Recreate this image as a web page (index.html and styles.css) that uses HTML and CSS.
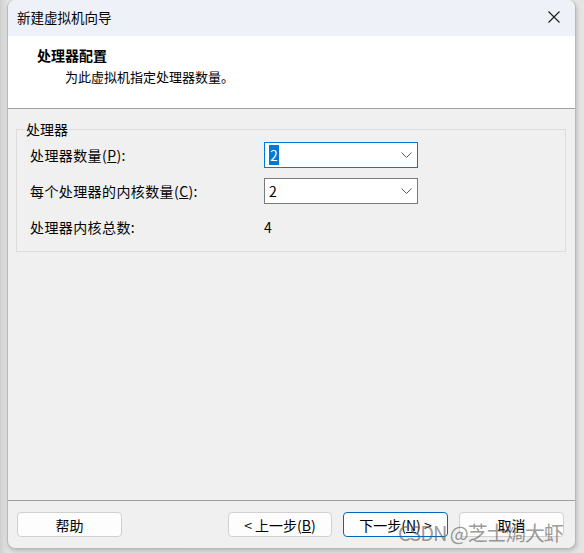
FILE: index.html
```html
<!DOCTYPE html>
<html lang="zh-CN">

<head>
    <meta charset="UTF-8">
    <meta name="viewport" content="width=device-width, initial-scale=1.0">
    <title>新建虚拟机向导</title>

    <link rel="stylesheet" href="styles.css">
</head>

<body>
    <div class="window">
        <div class="titlebar">
            <span class="title">新建虚拟机向导</span>
            <svg class="close" width="14" height="14" viewBox="0 0 14 14">
                <path d="M1.5 1.5 L12.5 12.5 M12.5 1.5 L1.5 12.5" stroke="#1a1a1a" stroke-width="1.1" fill="none" />
            </svg>
        </div>

        <div class="header">
            <h1>处理器配置</h1>
            <p>为此虚拟机指定处理器数量。</p>
        </div>

        <div class="content">
            <fieldset class="group">
                <legend>处理器</legend>
                <div class="rows">
                    <label>处理器数量(<u>P</u>):</label>
                    <div class="combo focused">
                        <span class="value"><span class="selected">2</span></span>
                        <svg class="chevron" width="11" height="6" viewBox="0 0 11 6">
                            <path d="M0.5 0.5 L5.5 5.5 L10.5 0.5" stroke="#555" stroke-width="1" fill="none" />
                        </svg>
                    </div>

                    <label>每个处理器的内核数量(<u>C</u>):</label>
                    <div class="combo">
                        <span class="value">2</span>
                        <svg class="chevron" width="11" height="6" viewBox="0 0 11 6">
                            <path d="M0.5 0.5 L5.5 5.5 L10.5 0.5" stroke="#555" stroke-width="1" fill="none" />
                        </svg>
                    </div>

                    <label>处理器内核总数:</label>
                    <span class="total">4</span>
                </div>
            </fieldset>
        </div>

        <div class="footer">
            <button class="btn">帮助</button>
            <button class="btn back">&lt; 上一步(<u>B</u>)</button>
            <button class="btn primary">下一步(<u>N</u>) &gt;</button>
            <button class="btn">取消</button>
        </div>

        <div class="watermark">CSDN @芝士焗大虾</div>
    </div>
</body>

</html>
```

FILE: styles.css
```css
body {
    margin: 0;
    height: 553px;
    overflow: hidden;
    background: linear-gradient(to right, #cfcfcf 0, #e2e2e2 7px, #e4e4e4 100%);
    font-family: "Noto Sans CJK SC", "Noto Sans", sans-serif;
    color: #000;
}

.window {
    position: relative;
    margin-left: 7px;
    width: 569px;
    height: 549px;
    box-sizing: border-box;
    border: 1px solid #b8b8b8;
    border-top: none;
    border-radius: 8px;
    background-color: #f0f0f0;
    overflow: hidden;
    display: flex;
    flex-direction: column;
    box-shadow: 1px 2px 4px rgba(0, 0, 0, 0.18);
}

.titlebar {
    height: 36px;
    flex: none;
    background-color: #eef2f8;
    display: flex;
    align-items: center;
    justify-content: space-between;
    padding: 0 14px 0 9px;
}

.title {
    font-size: 13.5px;
    line-height: 18px;
    margin-top: -3px;
}

.close {
    margin-top: -3px;
}

.header {
    height: 72px;
    flex: none;
    background-color: #fff;
    border-bottom: 1px solid #a0a0a0;
    padding-left: 29px;
    box-sizing: content-box;
}

.header h1 {
    margin: 0;
    padding-top: 9px;
    font-size: 14px;
    line-height: 20px;
    font-weight: bold;
}

.header p {
    margin: 2px 0 0 28px;
    font-size: 13px;
    line-height: 20px;
}

.content {
    flex: 1;
    padding: 11px 9px 0 8px;
}

.group {
    margin: 0;
    border: 1px solid #dcdcdc;
    padding: 4px 13px 11px 13px;
}

.group legend {
    margin-left: -5px;
    padding: 0 1px;
    font-size: 14px;
    line-height: 18px;
}

.rows {
    display: grid;
    grid-template-columns: 234px 154px;
    grid-auto-rows: 26px;
    row-gap: 10px;
    align-items: center;
    font-size: 14px;
}

.rows label {
    letter-spacing: 0.4px;
}

.combo {
    height: 26px;
    box-sizing: border-box;
    border: 1px solid #7a7a7a;
    background-color: #fff;
    display: flex;
    align-items: center;
    justify-content: space-between;
    padding: 0 5px 0 4px;
}

.combo.focused {
    border-color: #0078d7;
}

.value {
    font-size: 14px;
    line-height: 18px;
}

.selected {
    background-color: #0078d7;
    color: #fff;
    padding: 0 1px;
}

.total {
    font-size: 14px;
}

.footer {
    height: 48px;
    flex: none;
    box-sizing: border-box;
    border-top: 1px solid #a0a0a0;
    padding: 11px 11px 0 9px;
    display: flex;
    gap: 11px;
}

.btn {
    width: 105px;
    height: 25px;
    border: 1px solid #d0d0d0;
    border-radius: 4px;
    background-color: #fdfdfd;
    font-family: "Noto Sans CJK SC", "Noto Sans", sans-serif;
    font-size: 14px;
    color: #000;
    padding: 0;
}

.btn.back {
    margin-left: auto;
    width: 104px;
}

.btn.primary {
    border-color: #0067c0;
}

.watermark {
    position: absolute;
    left: 390px;
    bottom: 1px;
    font-size: 20px;
    line-height: 28px;
    letter-spacing: -1px;
    color: rgba(90, 90, 90, 0.62);
    pointer-events: none;
}
```
